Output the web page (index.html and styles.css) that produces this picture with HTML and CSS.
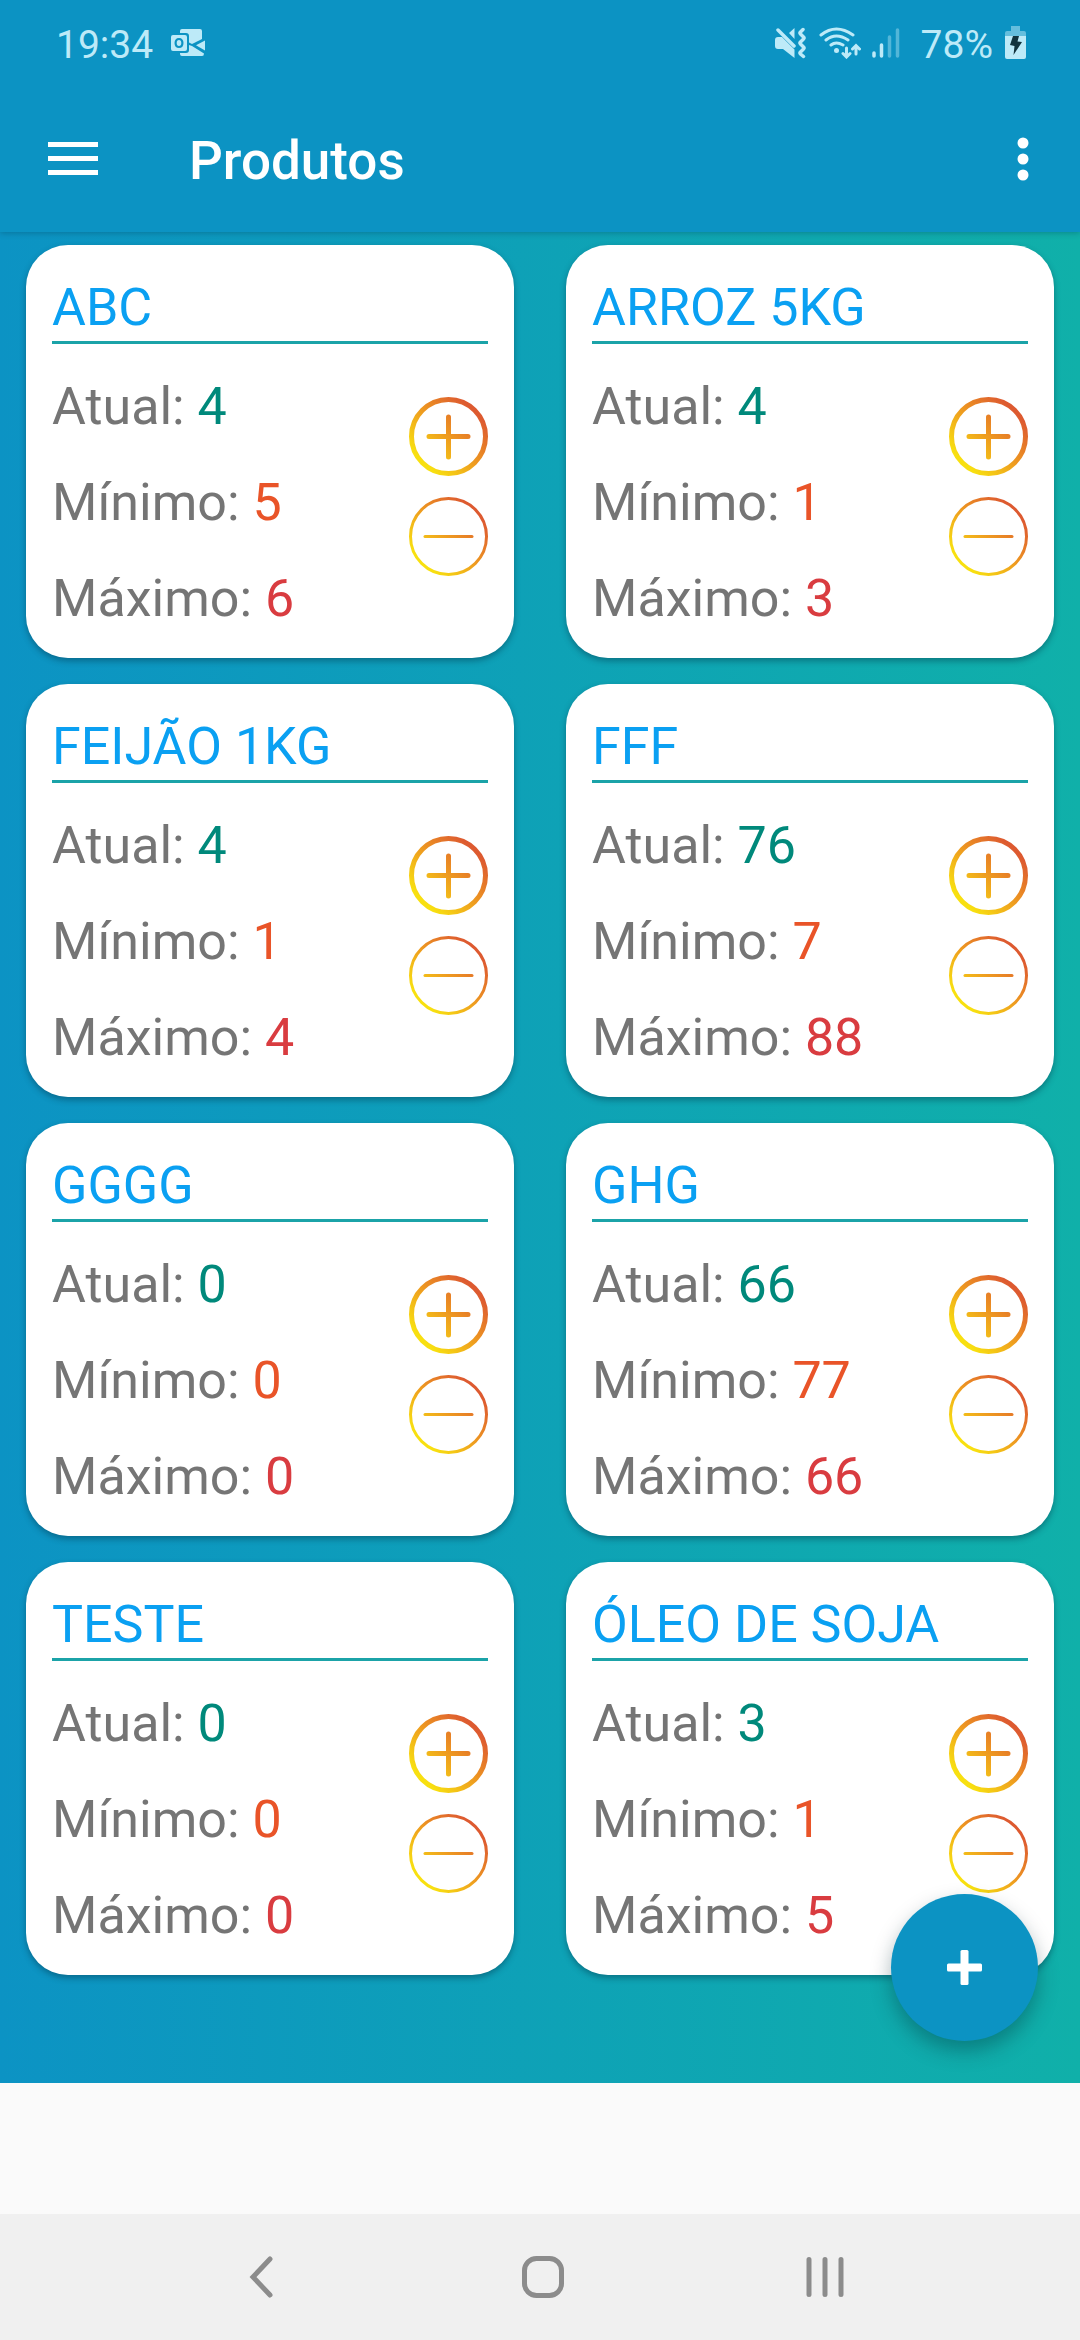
FILE: index.html
```html
<!DOCTYPE html>
<html lang="pt-BR">
<head>
<meta charset="utf-8">
<meta name="viewport" content="width=device-width, initial-scale=1">
<title>Produtos</title>
<link rel="stylesheet" href="styles.css">
</head>
<body>
<svg class="defs" width="0" height="0" aria-hidden="true">
  <defs>
    <linearGradient id="sun" gradientUnits="userSpaceOnUse" x1="14" y1="65" x2="65" y2="14">
      <stop offset="0" stop-color="#f8e010"/>
      <stop offset="0.5" stop-color="#ee9a20"/>
      <stop offset="1" stop-color="#dd5a30"/>
    </linearGradient>
    <symbol id="plus" viewBox="0 0 79 79">
      <circle cx="39.500" cy="39.500" r="37" fill="none" stroke="url(#sun)" stroke-width="5"/>
      <path d="M20 39.500H59M39.500 20V60" fill="none" stroke="url(#sun)" stroke-width="5" stroke-linecap="round"/>
    </symbol>
    <symbol id="minus" viewBox="0 0 79 79">
      <circle cx="39.500" cy="39.500" r="38" fill="none" stroke="url(#sun)" stroke-width="3"/>
      <path d="M16 38H63a1.500 1.500 0 0 1 0 3H16a1.500 1.500 0 0 1 0-3Z" fill="url(#sun)"/>
    </symbol>
  </defs>
</svg>

<header class="top">
  <div class="status">
    <span class="clock">19:34</span>
    <svg class="outlook" width="34" height="27" viewBox="0 0 34 27" fill="currentColor" aria-hidden="true">
      <path fill-rule="evenodd" d="M2 6H14Q16 6 16 8V20Q16 22 14 22H2Q0 22 0 20V8Q0 6 2 6ZM8 9C5 9 3.500 11 3.500 14S5 19 8 19S12.500 17 12.500 14S11 9 8 9ZM8 11C9.500 11 10.300 12 10.300 14S9.500 17 8 17S5.700 16 5.700 14S6.500 11 8 11Z"/>
      <path d="M9 4V2Q9 0 11 0H29Q31 0 31 2V10L21 15L18 13.500V7Q18 4 15 4ZM34 11.500V21.500L25 16.200ZM9 24H15Q18 24 18 21V16L21 17L33 24.500Q33 27 31 27H11Q9 27 9 25Z"/>
    </svg>
    <div class="signals">
      <svg width="31" height="32" viewBox="0 0 31 32" fill="currentColor" aria-hidden="true">
        <path d="M3 10H7L19.500 22.500V31L8 22H3Q0 22 0 19V13Q0 10 3 10ZM14 6L19.500 1V12Z"/>
        <path d="M3 3L19 19M28 2.500L25.500 5Q24.500 6 25.500 7L28.500 10Q29.500 11 28.500 12L25.500 15Q24.500 16 25.500 17L28.500 20Q29.500 21 28.500 22L25.500 25Q24.500 26 25.500 27L28.500 29.500" fill="none" stroke="currentColor" stroke-width="3.500" stroke-linecap="round"/>
      </svg>
      <svg class="wifi" width="42" height="32" viewBox="0 0 42 32" fill="none" stroke="currentColor" stroke-width="3" stroke-linecap="round" aria-hidden="true">
        <path d="M2 8Q17-4 34 8M7 13Q17 5 29 13M12 18Q17 14 24 18"/>
        <circle cx="17.500" cy="23.500" r="2.500" fill="currentColor" stroke="none"/>
        <path d="M27.500 21V29M24 26.500L27.500 30L31 26.500M37 27V19.500M33.500 22L37 18.500L40.500 22"/>
      </svg>
      <svg class="bars" width="28" height="30" viewBox="0 0 28 30" stroke="currentColor" stroke-width="3.500" stroke-linecap="round" aria-hidden="true">
        <path d="M2 25V28M9.500 17V28"/>
        <path d="M17.500 9V28M25.500 2V28" opacity="0.4"/>
      </svg>
      <span class="charge">78%</span>
      <svg width="21" height="33" viewBox="0 0 21 33" aria-hidden="true">
        <path d="M6 0H15V5H19Q21 5 21 7V10H0V7Q0 5 2 5H6Z" fill="currentColor" opacity="0.5"/>
        <path d="M0 10H21V31Q21 33 19 33H2Q0 33 0 31Z" fill="currentColor"/>
        <path d="M8 10L14 10L12.500 15.500L17 16L8.500 29L9.500 20L5 19Z" fill="#12343f"/>
      </svg>
    </div>
  </div>
  <div class="appbar">
    <button class="icon-button" aria-label="Abrir menu">
      <svg width="50" height="34" viewBox="0 0 50 34" fill="#fff"><path d="M0 0H50V5H0ZM0 14H50V19H0ZM0 28H50V33H0Z"/></svg>
    </button>
    <h1>Produtos</h1>
    <button class="icon-button" aria-label="Mais opções">
      <svg width="12" height="44" viewBox="0 0 12 44" fill="#fff"><circle cx="6" cy="6" r="5.500"/><circle cx="6" cy="22" r="5.500"/><circle cx="6" cy="38" r="5.500"/></svg>
    </button>
  </div>
</header>

<main class="content">
  <section class="grid" id="grid">
    <article class="card">
      <h2>ABC</h2>
      <div class="body">
        <div class="levels"><p>Atual: <b class="now">4</b></p><p>Mínimo: <b class="min">5</b></p><p>Máximo: <b class="max">6</b></p></div>
        <div class="actions"><button aria-label="Adicionar"><svg><use href="#plus"/></svg></button><button aria-label="Remover"><svg><use href="#minus"/></svg></button></div>
      </div>
    </article>
    <article class="card">
      <h2>ARROZ 5KG</h2>
      <div class="body">
        <div class="levels"><p>Atual: <b class="now">4</b></p><p>Mínimo: <b class="min">1</b></p><p>Máximo: <b class="max">3</b></p></div>
        <div class="actions"><button aria-label="Adicionar"><svg><use href="#plus"/></svg></button><button aria-label="Remover"><svg><use href="#minus"/></svg></button></div>
      </div>
    </article>
    <article class="card">
      <h2>FEIJÃO 1KG</h2>
      <div class="body">
        <div class="levels"><p>Atual: <b class="now">4</b></p><p>Mínimo: <b class="min">1</b></p><p>Máximo: <b class="max">4</b></p></div>
        <div class="actions"><button aria-label="Adicionar"><svg><use href="#plus"/></svg></button><button aria-label="Remover"><svg><use href="#minus"/></svg></button></div>
      </div>
    </article>
    <article class="card">
      <h2>FFF</h2>
      <div class="body">
        <div class="levels"><p>Atual: <b class="now">76</b></p><p>Mínimo: <b class="min">7</b></p><p>Máximo: <b class="max">88</b></p></div>
        <div class="actions"><button aria-label="Adicionar"><svg><use href="#plus"/></svg></button><button aria-label="Remover"><svg><use href="#minus"/></svg></button></div>
      </div>
    </article>
    <article class="card">
      <h2>GGGG</h2>
      <div class="body">
        <div class="levels"><p>Atual: <b class="now">0</b></p><p>Mínimo: <b class="min">0</b></p><p>Máximo: <b class="max">0</b></p></div>
        <div class="actions"><button aria-label="Adicionar"><svg><use href="#plus"/></svg></button><button aria-label="Remover"><svg><use href="#minus"/></svg></button></div>
      </div>
    </article>
    <article class="card">
      <h2>GHG</h2>
      <div class="body">
        <div class="levels"><p>Atual: <b class="now">66</b></p><p>Mínimo: <b class="min">77</b></p><p>Máximo: <b class="max">66</b></p></div>
        <div class="actions"><button aria-label="Adicionar"><svg><use href="#plus"/></svg></button><button aria-label="Remover"><svg><use href="#minus"/></svg></button></div>
      </div>
    </article>
    <article class="card">
      <h2>TESTE</h2>
      <div class="body">
        <div class="levels"><p>Atual: <b class="now">0</b></p><p>Mínimo: <b class="min">0</b></p><p>Máximo: <b class="max">0</b></p></div>
        <div class="actions"><button aria-label="Adicionar"><svg><use href="#plus"/></svg></button><button aria-label="Remover"><svg><use href="#minus"/></svg></button></div>
      </div>
    </article>
    <article class="card">
      <h2>ÓLEO DE SOJA</h2>
      <div class="body">
        <div class="levels"><p>Atual: <b class="now">3</b></p><p>Mínimo: <b class="min">1</b></p><p>Máximo: <b class="max">5</b></p></div>
        <div class="actions"><button aria-label="Adicionar"><svg><use href="#plus"/></svg></button><button aria-label="Remover"><svg><use href="#minus"/></svg></button></div>
      </div>
    </article>
  </section>
  <button class="fab" aria-label="Novo produto">
    <svg width="35" height="35" viewBox="0 0 35 35" fill="#fff"><rect x="13.500" width="8" height="35" rx="1.500"/><rect y="13.500" width="35" height="8" rx="1.500"/></svg>
  </button>
</main>

<nav class="system" aria-label="Navegação do sistema">
  <button aria-label="Voltar"><svg width="24" height="42" viewBox="0 0 24 42"><path d="M21 3L4 21L21 39"/></svg></button>
  <button aria-label="Início"><svg width="42" height="42" viewBox="0 0 42 42"><rect x="2.500" y="2.500" width="37" height="37" rx="12"/></svg></button>
  <button aria-label="Recentes"><svg width="38" height="42" viewBox="0 0 38 42"><path d="M3 3.500V38.500M19 3.500V38.500M35 3.500V38.500"/></svg></button>
</nav>
</body>
</html>
```
FILE: styles.css
```css
* {
  box-sizing: border-box;
  margin: 0;
  padding: 0;
}

body {
  display: flex;
  flex-direction: column;
  min-height: 100vh;
  background: #fafafa;
  font-family: Roboto, "Noto Sans", sans-serif;
}

svg {
  display: block;
}

.defs {
  position: absolute;
}

button {
  border: 0;
  background: none;
  cursor: pointer;
}

.top {
  position: relative;
  z-index: 1;
  background: #0c93c3;
  box-shadow: 0 1px 6px rgba(0, 40, 60, 0.3);
}

.status {
  display: flex;
  align-items: center;
  height: 85px;
  padding: 0 54px 0 56px;
  color: #bdeaf8;
  font-size: 39px;
  line-height: 46px;
}

.clock,
.charge {
  padding-top: 4px;
}

.outlook {
  margin-left: 18px;
}

.signals {
  display: flex;
  align-items: center;
  margin-left: auto;
}

.wifi {
  margin-left: 13px;
}

.bars {
  margin: 0 21px 0 11px;
}

.charge {
  margin-right: 12px;
}

.appbar {
  display: flex;
  align-items: center;
  height: 147px;
  padding: 0 51px 0 48px;
}

.appbar h1 {
  flex: 1;
  margin-left: 91px;
  padding-top: 4px;
  color: #fff;
  font-size: 53px;
  font-weight: 500;
  line-height: 62px;
}

.content {
  position: relative;
  background: linear-gradient(to right, #0c93c4, #10b0a9);
}

.grid {
  display: grid;
  grid-template-columns: 1fr 1fr;
  gap: 26px 52px;
  padding: 13px 26px 108px;
}

.card {
  padding: 26px;
  border-radius: 42px;
  background: #fff;
  box-shadow: 0 3px 6px rgba(0, 40, 60, 0.4);
}

.card h2,
.card p {
  padding-top: 4px;
  font-size: 52px;
  font-weight: 400;
  line-height: 66px;
}

.card h2 {
  border-bottom: 3px solid #1ba3a8;
  color: #0aa0f2;
}

.body {
  display: flex;
  justify-content: space-between;
  margin-top: 26px;
}

.levels {
  display: grid;
  gap: 26px;
  color: #757575;
}

.levels b {
  font-weight: 400;
}

.levels .now {
  color: #00897b;
}

.levels .min {
  color: #e95428;
}

.levels .max {
  color: #d93c40;
}

.actions {
  display: flex;
  flex-direction: column;
  gap: 21px;
  margin-top: 27px;
}

.actions svg {
  width: 79px;
  height: 79px;
}

.fab {
  position: absolute;
  right: 42px;
  bottom: 42px;
  display: grid;
  place-items: center;
  width: 147px;
  height: 147px;
  border-radius: 50%;
  background: #0c93c3;
  box-shadow: 0 10px 20px rgba(0, 40, 50, 0.35);
}

.system {
  display: flex;
  height: 126px;
  margin-top: auto;
  padding: 0 114px 0 120px;
  background: #f0f0f0;
}

.system button {
  display: grid;
  flex: 1;
  place-items: center;
}

.system svg {
  fill: none;
  stroke: #8c8c8c;
  stroke-width: 5;
  stroke-linecap: round;
}
```
